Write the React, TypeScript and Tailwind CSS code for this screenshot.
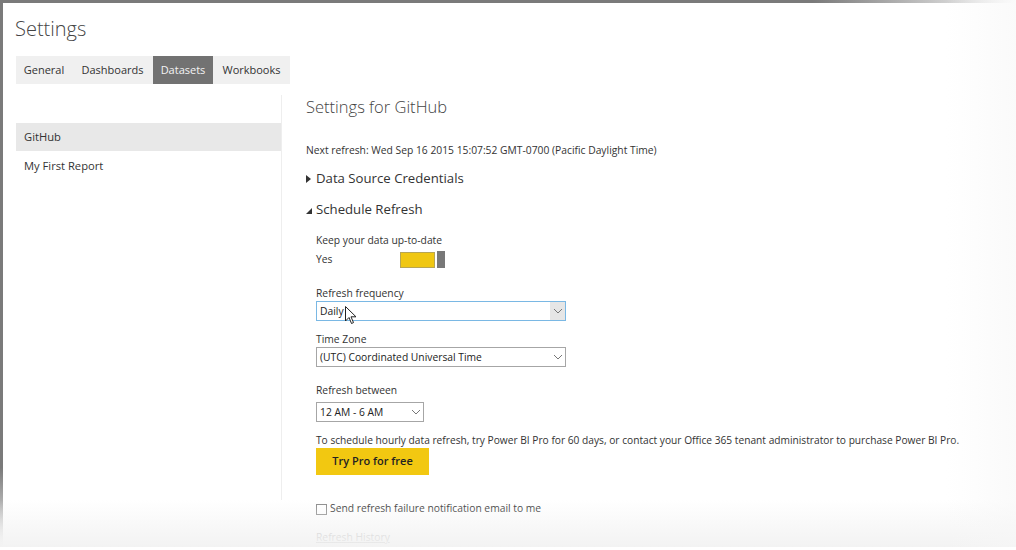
import React from 'react';

const font = { fontFamily: '"Open Sans", "Noto Sans", sans-serif' };

const Chevron = () => (
  <svg width="10" height="6" viewBox="0 0 10 6" className="text-[#777]">
    <path d="M1 1 L5 5 L9 1" fill="none" stroke="currentColor" strokeWidth="1" />
  </svg>
);

interface SelectProps {
  value: string;
  width: string;
  focused?: boolean;
}

const FakeSelect: React.FC<SelectProps> = ({ value, width, focused }) => (
  <div
    className={`${width} flex h-[20px] items-center justify-between border bg-white pl-[3px] ${
      focused ? 'border-[#7ab8e4]' : 'border-[#a6a6a6]'
    }`}
  >
    <span className="text-[10.3px] leading-none text-[#222]">{value}</span>
    <span
      className={`flex h-full w-[15px] items-center justify-center ${focused ? 'bg-[#e6e6e6]' : ''}`}
    >
      <Chevron />
    </span>
  </div>
);

const tabs = [
  { name: 'General', w: 'w-[56px]' },
  { name: 'Dashboards', w: 'w-[81px]' },
  { name: 'Datasets', w: 'w-[60px]' },
  { name: 'Workbooks', w: 'w-[77px]' },
];

export default function App() {
  return (
    <div style={font} className="relative h-[550px] w-[1016px] overflow-hidden bg-white text-[#333]">
      {/* window frame */}
      <div className="absolute left-0 top-0 h-[3px] w-full bg-gradient-to-r from-[#7a7a7a] via-[#7a7a7a] via-80% to-white" />
      <div className="absolute left-0 top-0 h-full w-[3px] bg-gradient-to-b from-[#7a7a7a] via-[#7a7a7a] via-85% to-white" />

      <div className="pl-[15px] pt-[14px]">
        <h1 className="text-[20px] font-light leading-[30px] text-[#444]">Settings</h1>

        <div className="mt-[12px] ml-[1px] flex h-[28px] w-fit bg-[#f0f0f0] text-[11px]">
          {tabs.map(t => (
            <div
              key={t.name}
              className={`flex items-center justify-center ${t.w} ${
                t.name === 'Datasets' ? 'bg-[#727272] text-[#f4f4f4]' : 'text-[#333]'
              }`}
            >
              {t.name}
            </div>
          ))}
        </div>

        <div className="flex">
          {/* left list */}
          <div className="ml-[1px] mt-[11px] h-[405px] w-[266px] border-r border-[#eeeeee]">
            <div className="mt-[28px] flex h-[28px] items-center bg-[#e8e8e8] pl-[8px] text-[11.2px]">
              GitHub
            </div>
            <div className="flex h-[30px] items-center pl-[8px] text-[11.2px]">My First Report</div>
          </div>

          {/* right settings */}
          <div className="ml-[24px] flex flex-col">
            <div className="mt-[11px] h-[24px] text-[16.5px] font-light leading-[24px] text-[#444]">
              Settings for GitHub
            </div>
            <div className="mt-[23px] h-[16px] text-[10.3px] leading-[16px] text-[#333]">
              Next refresh: Wed Sep 16 2015 15:07:52 GMT-0700 (Pacific Daylight Time)
            </div>

            <div className="mt-[11px] flex h-[20px] items-center text-[13.2px] text-[#333]">
              <svg width="5" height="8" viewBox="0 0 5 8" className="mr-[5px]">
                <path d="M0 0 L5 4 L0 8 Z" fill="#333" />
              </svg>
              Data Source Credentials
            </div>
            <div className="mt-[11px] flex h-[20px] items-center text-[13.2px] text-[#333]">
              <svg width="6" height="6" viewBox="0 0 6 6" className="mr-[4px] mt-[2px]">
                <path d="M6 0 L6 6 L0 6 Z" fill="#333" />
              </svg>
              Schedule Refresh
            </div>

            <div className="ml-[10px] flex flex-col">
              <div className="mt-[12px] h-[16px] text-[10.3px] leading-[16px]">Keep your data up-to-date</div>
              <div className="mt-[3px] flex h-[17px] items-center">
                <span className="w-[84px] text-[10.3px]">Yes</span>
                <span className="h-[16px] w-[35px] border border-[#b7a553] bg-[#f0c712]" />
                <span className="ml-[2px] h-[17px] w-[8px] bg-[#787878]" />
              </div>

              <div className="mt-[18px] h-[15px] text-[10.3px] leading-[15px]">Refresh frequency</div>
              <FakeSelect value="Daily" width="w-[250px]" focused />

              <div className="mt-[11px] h-[15px] text-[10.3px] leading-[15px]">Time Zone</div>
              <FakeSelect value="(UTC) Coordinated Universal Time" width="w-[250px]" />

              <div className="mt-[16px] h-[15px] text-[10.3px] leading-[15px]">Refresh between</div>
              <div className="mt-[4px]">
                <FakeSelect value="12 AM - 6 AM" width="w-[108px]" />
              </div>

              <div className="mt-[10px] h-[16px] whitespace-nowrap text-[10.2px] leading-[16px]">
                To schedule hourly data refresh, try Power BI Pro for 60 days, or contact your Office 365 tenant
                administrator to purchase Power BI Pro.
              </div>
              <button
                type="button"
                className="flex h-[27px] w-[113px] items-center justify-center bg-[#f2c811] text-[11px] font-semibold text-[#222]"
              >
                Try Pro for free
              </button>

              <label className="mt-[26px] flex h-[16px] items-center text-[10.3px]">
                <span className="mr-[3px] h-[11px] w-[11px] border border-[#888] bg-white" />
                Send refresh failure notification email to me
              </label>
              <div className="mt-[12px] h-[16px] text-[10.3px] leading-[16px] text-[#b5b5b5] underline">
                Refresh History
              </div>
            </div>
          </div>
        </div>
      </div>

      {/* mouse cursor */}
      <svg className="absolute left-[345px] top-[306px]" width="12" height="19" viewBox="0 0 12 19">
        <path
          d="M0.5 0.5 L0.5 15 L4 11.5 L6.5 17.5 L8.5 16.6 L6 10.8 L11 10.8 Z"
          fill="#fff"
          stroke="#222"
          strokeWidth="1"
          strokeLinejoin="round"
        />
      </svg>

      {/* bottom and right fade of the captured frame */}
      <div className="pointer-events-none absolute bottom-0 left-0 h-[50px] w-full bg-gradient-to-b from-white/0 to-[#f2f2f2]" />
      <div className="pointer-events-none absolute right-0 top-0 h-full w-[70px] bg-gradient-to-r from-white/0 to-[#f7f7f7]/60" />
      <div className="pointer-events-none absolute bottom-0 left-0 h-[3px] w-full bg-white" />
    </div>
  );
}
